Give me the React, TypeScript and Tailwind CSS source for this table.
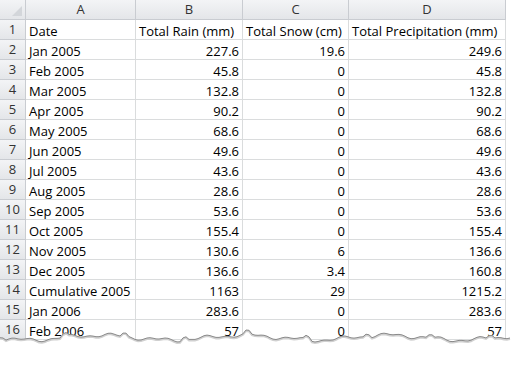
import React from 'react'

const rows: [string, string, string, string][] = [
  ['Jan 2005', '227.6', '19.6', '249.6'],
  ['Feb 2005', '45.8', '0', '45.8'],
  ['Mar 2005', '132.8', '0', '132.8'],
  ['Apr 2005', '90.2', '0', '90.2'],
  ['May 2005', '68.6', '0', '68.6'],
  ['Jun 2005', '49.6', '0', '49.6'],
  ['Jul 2005', '43.6', '0', '43.6'],
  ['Aug 2005', '28.6', '0', '28.6'],
  ['Sep 2005', '53.6', '0', '53.6'],
  ['Oct 2005', '155.4', '0', '155.4'],
  ['Nov 2005', '130.6', '6', '136.6'],
  ['Dec 2005', '136.6', '3.4', '160.8'],
  ['Cumulative 2005', '1163', '29', '1215.2'],
  ['Jan 2006', '283.6', '0', '283.6'],
  ['Feb 2006', '57', '0', '57'],
]

const cols = 'grid grid-cols-[26px_110px_107px_106px_157px]'
const hdr = 'h-5 border-r border-b border-[#c9ccd1] bg-gradient-to-b from-[#f3f4f6] to-[#e4e6e9] text-[#333] flex items-center justify-center'
const cell = 'h-5 border-r border-b border-[#dadcdd] flex items-end pb-[1px] whitespace-nowrap overflow-hidden'

// torn paper edge
function tornPath() {
  const pts: string[] = []
  for (let x = 0; x <= 512; x += 3) {
    const y =
      337.5 +
      2.4 * Math.sin(x / 23 + 0.4) +
      1.5 * Math.sin(x / 7.3 + 1.7) +
      1 * Math.sin(x / 3.1 + 0.9) +
      (x % 61 < 6 ? -3 : 0)
    pts.push(`${x},${y.toFixed(1)}`)
  }
  return pts
}

export default function App() {
  const pts = tornPath()
  const edge = 'M' + pts.join(' L')
  const fill = edge + ' L512,368 L0,368 Z'

  return (
    <div className="relative w-[512px] h-[368px] bg-white overflow-hidden font-['Open_Sans','Liberation_Sans',sans-serif] text-[13px] leading-none text-black">
      <div className="w-[507px]">
        <div className={cols}>
          <div className={hdr + ' relative'}>
            <svg width="10" height="10" className="absolute right-[3px] bottom-[3px]">
              <path d="M10,0 L10,10 L0,10 Z" fill="#d3d6da" />
            </svg>
          </div>
          {['A', 'B', 'C', 'D'].map((c) => (
            <div key={c} className={hdr}>
              {c}
            </div>
          ))}
        </div>

        <div className={cols}>
          <div className={hdr}>1</div>
          <div className={cell + ' pl-[3px]'}>Date</div>
          <div className={cell + ' pl-[3px]'}>Total Rain (mm)</div>
          <div className={cell + ' pl-[3px]'}>Total Snow (cm)</div>
          <div className={cell + ' pl-[3px]'}>Total Precipitation (mm)</div>
        </div>

        {rows.map((r, i) => (
          <div key={i} className={cols}>
            <div className={hdr}>{i + 2}</div>
            <div className={cell + ' pl-[3px]'}>{r[0]}</div>
            <div className={cell + ' justify-end pr-[3px]'}>{r[1]}</div>
            <div className={cell + ' justify-end pr-[3px]'}>{r[2]}</div>
            <div className={cell + ' justify-end pr-[3px]'}>{r[3]}</div>
          </div>
        ))}
      </div>

      <svg width="512" height="368" className="absolute left-0 top-0">
        <path d={fill} fill="#ffffff" />
        <path d={edge} fill="none" stroke="#d0d0d0" strokeWidth="2" transform="translate(0,1)" />
        <path d={edge} fill="none" stroke="#8a8a8a" strokeWidth="1" />
      </svg>
    </div>
  )
}
